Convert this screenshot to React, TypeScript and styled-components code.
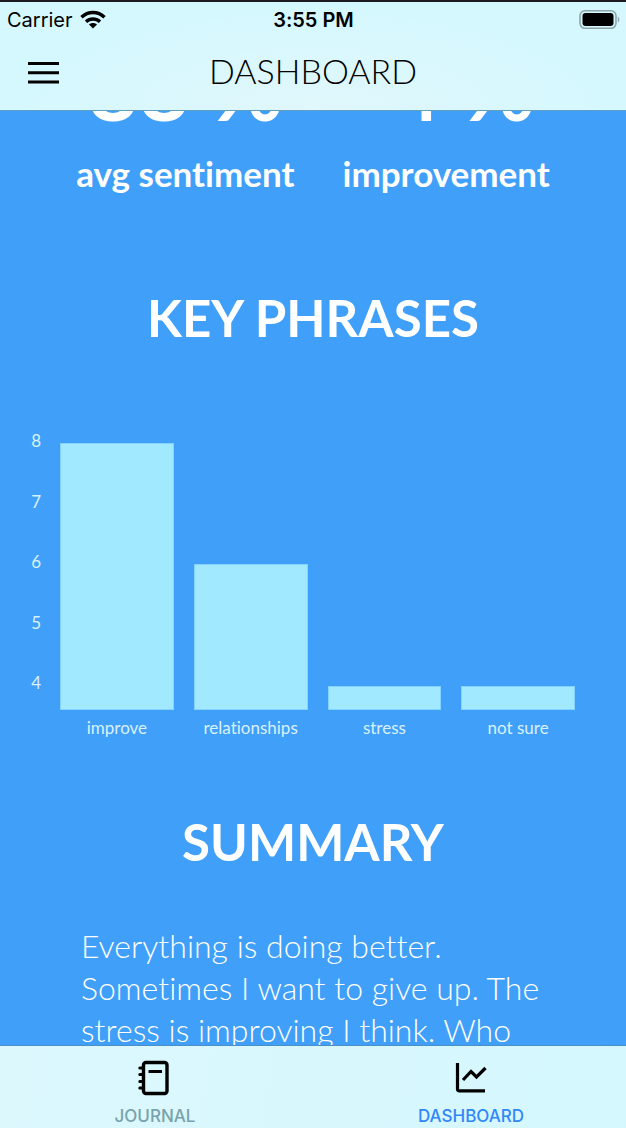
import React from "react";
import styled, { createGlobalStyle } from "styled-components";

const display = '"Lato", "Liberation Sans", sans-serif';
const system = '"Inter", "Liberation Sans", sans-serif';

const GlobalStyle = createGlobalStyle`
  * { box-sizing: border-box; }
  body {
    margin: 0;
    background: #409ff8;
    font-family: ${display};
  }
  #root * { font-variant-ligatures: none; }
  h1, h2, p, dl, dd { margin: 0; }
`;

const Screen = styled.div`
  height: 100vh;
  overflow: hidden;
  display: flex;
  flex-direction: column;
`;

const Header = styled.header`
  flex: none;
  height: 111px;
  color: #000;
  background: radial-gradient(ellipse at 50% 100%, #e0f7fb 0%, #d5f8fe 65%);
  border-top: 2px solid #1c1c1e;
  border-bottom: 1px solid #5f9fc0;
`;

const StatusBar = styled.div`
  display: grid;
  grid-template-columns: 1fr auto 1fr;
  align-items: center;
  height: 36px;
  padding: 0 6px 0 7px;
  font: 400 20px/24px ${system};
`;

const Carrier = styled.span`
  display: flex;
  align-items: center;
  gap: 7px;
`;

const Clock = styled.time`
  font-weight: 600;
`;

const Battery = styled.svg`
  justify-self: end;
`;

const TitleBar = styled.div`
  display: grid;
  grid-template-columns: 44px 1fr 44px;
  align-items: center;
  height: 68px;
  padding: 0 21px;
`;

const MenuButton = styled.button`
  display: flex;
  justify-content: center;
  padding: 12px 0;
  border: 0;
  background: none;
  color: inherit;
`;

const Title = styled.h1`
  padding-bottom: 2px;
  font: 300 34px/44px ${display};
  text-align: center;
`;

const Content = styled.main`
  flex: 1;
  min-height: 0;
  overflow: hidden;
  color: #fff;
`;

const Stats = styled.dl`
  display: flex;
  justify-content: center;
  gap: 48px;
  margin-top: -66px;
`;

const Stat = styled.div`
  display: flex;
  flex-direction: column-reverse;
  align-items: center;
`;

const StatLabel = styled.dt`
  font: 700 35px/44px ${display};
`;

const StatValue = styled.dd`
  height: 106px;
  font: 700 88px/84px ${display};
  white-space: nowrap;
`;

const SectionTitle = styled.h2`
  font: 700 51px/64px ${display};
  text-align: center;
`;

const KeyPhrases = styled.section`
  padding-top: 91px;
`;

const Chart = styled.figure`
  display: grid;
  grid-template-columns: 41px 1fr;
  column-gap: 19px;
  margin: 81px 51px 0 0;
  color: #d8f1ff;
  font: 400 17px/20px ${display};
`;

const Axis = styled.div`
  display: flex;
  flex-direction: column;
  justify-content: space-between;
  height: 262px;
  text-align: right;
`;

const Bars = styled.div`
  display: grid;
  grid-template-columns: repeat(4, 1fr);
  column-gap: 20px;
  padding-top: 12px;
`;

const BarColumn = styled.div`
  display: flex;
  flex-direction: column;
  text-align: center;
  white-space: nowrap;
`;

const BarTrack = styled.div`
  display: flex;
  align-items: flex-end;
  height: 267px;
  margin-bottom: 8px;
`;

const Bar = styled.div`
  width: 100%;
  background: #a0e9ff;
  border: 1px solid #85d3fd;
`;

const Summary = styled.section`
  padding-top: 72px;
`;

const SummaryText = styled.p`
  padding: 51px 81px 0;
  font: 300 32px/42px ${display};
`;

const TabBar = styled.nav`
  flex: none;
  display: grid;
  grid-template-columns: 1fr 1fr;
  height: 83px;
  margin: 0 -3px;
  background: linear-gradient(100deg, #dcf8fd, #d4f7fe);
  border-top: 1px solid #4a8fc6;
`;

const Tab = styled.a<{ $active?: boolean }>`
  display: flex;
  flex-direction: column;
  align-items: center;
  gap: 9px;
  padding-top: 14px;
  color: ${(p) => (p.$active ? "#3187fa" : "#78a2ac")};
  font: 500 17px/22px ${system};
  text-decoration: none;

  svg { color: #000; }
`;

const ticks = [8, 7, 6, 5, 4];
const floor = 3.6;
const phrases = [
  { label: "improve", count: 8 },
  { label: "relationships", count: 6 },
  { label: "stress", count: 4 },
  { label: "not sure", count: 4 },
];

const WifiIcon = () => (
  <svg width="26" height="20" viewBox="0 0 26 20" fill="none" stroke="currentColor" strokeWidth="3.4" aria-hidden="true">
    <path d="M1.5 7.2C8 .9 18 .9 24.500 7.200" />
    <path d="M6 11.700C10 8 16 8 20 11.700" />
    <path d="M13 18.500L9 14.500C11.200 12.500 14.800 12.500 17 14.500Z" fill="currentColor" stroke="none" />
  </svg>
);

const BatteryIcon = () => (
  <Battery width="41" height="20" viewBox="0 0 41 20" role="img" aria-label="Battery full">
    <rect x="1" y="0.800" width="36" height="17.500" rx="5" fill="none" stroke="#8fa5aa" strokeWidth="1.6" />
    <rect x="3.500" y="3" width="31" height="13" rx="3" />
    <path d="M38.800 6.500C40.800 7.500 40.800 11.500 38.800 12.500Z" fill="#8fa5aa" />
  </Battery>
);

const MenuIcon = () => (
  <svg width="32" height="24" viewBox="0 0 32 24" stroke="currentColor" strokeWidth="3" aria-hidden="true">
    <path d="M1 3.500H32M1 12.700H32M1 22H32" />
  </svg>
);

const JournalIcon = () => (
  <svg width="36" height="36" viewBox="0 0 36 36" fill="none" stroke="currentColor" aria-hidden="true">
    <rect x="6.500" y="2.500" width="23.500" height="31" rx="2.500" strokeWidth="3.400" />
    <path d="M2.800 8H6M2.800 14.500H6M2.800 21.500H6M2.800 28H6" strokeWidth="3" strokeLinecap="round" />
    <path d="M11.500 11.500H25" strokeWidth="3" />
  </svg>
);

const ChartIcon = () => (
  <svg width="36" height="36" viewBox="0 0 36 36" fill="none" stroke="currentColor" strokeWidth="3.200" aria-hidden="true">
    <path d="M4.500 3V29Q4.500 30.800 6.500 30.800H32" />
    <path d="M10 20L18 11.500L23.500 17L32.500 8" />
  </svg>
);

export default function App() {
  return (
    <Screen>
      <GlobalStyle />
      <Header>
        <StatusBar>
          <Carrier>Carrier <WifiIcon /></Carrier>
          <Clock>3:55 PM</Clock>
          <BatteryIcon />
        </StatusBar>
        <TitleBar>
          <MenuButton type="button" aria-label="Open menu"><MenuIcon /></MenuButton>
          <Title>DASHBOARD</Title>
        </TitleBar>
      </Header>
      <Content>
        <Stats>
          <Stat>
            <StatLabel>avg sentiment</StatLabel>
            <StatValue>88 %</StatValue>
          </Stat>
          <Stat>
            <StatLabel>improvement</StatLabel>
            <StatValue>-4 %</StatValue>
          </Stat>
        </Stats>
        <KeyPhrases>
          <SectionTitle>KEY PHRASES</SectionTitle>
          <Chart aria-label="Key phrase counts">
            <Axis>
              {ticks.map((t) => <span key={t}>{t}</span>)}
            </Axis>
            <Bars>
              {phrases.map((p) => (
                <BarColumn key={p.label}>
                  <BarTrack>
                    <Bar style={{ height: `${((p.count - floor) / (8 - floor)) * 100}%` }} />
                  </BarTrack>
                  {p.label}
                </BarColumn>
              ))}
            </Bars>
          </Chart>
        </KeyPhrases>
        <Summary>
          <SectionTitle>SUMMARY</SectionTitle>
          <SummaryText>
            Everything is doing better. Sometimes I want to give up. The stress is improving I think. Who
          </SummaryText>
        </Summary>
      </Content>
      <TabBar>
        <Tab href="#journal"><JournalIcon />JOURNAL</Tab>
        <Tab href="#dashboard" $active aria-current="page"><ChartIcon />DASHBOARD</Tab>
      </TabBar>
    </Screen>
  );
}
